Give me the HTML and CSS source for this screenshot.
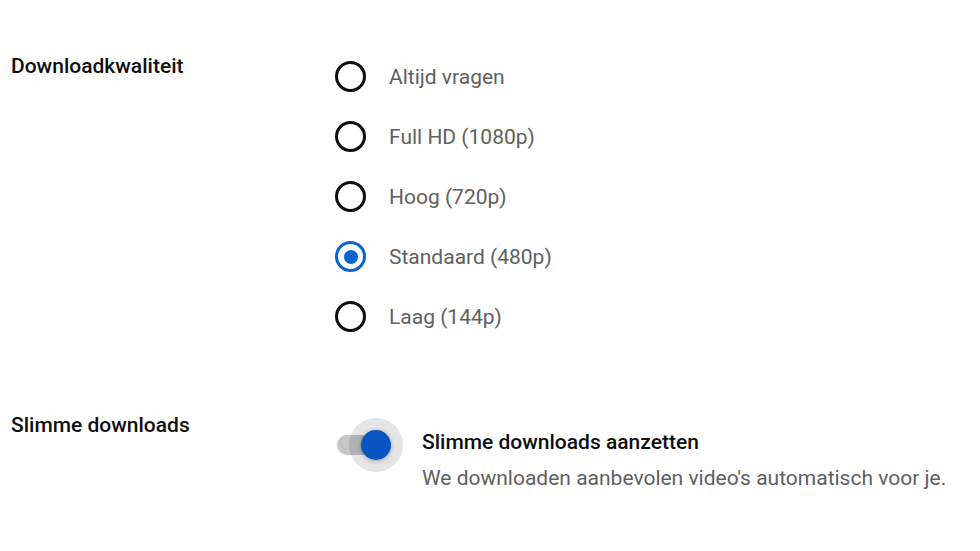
FILE: index.html
```html
<!DOCTYPE html>
<html>
<head>
<meta charset="utf-8">
<link rel="stylesheet" href="styles.css">
</head>
<body>
<div class="page">
  <section class="row quality">
    <div class="label">Downloadkwaliteit</div>
    <div class="options">
      <label class="option"><span class="radio"></span><span class="opt-text">Altijd vragen</span></label>
      <label class="option"><span class="radio"></span><span class="opt-text">Full HD (1080p)</span></label>
      <label class="option"><span class="radio"></span><span class="opt-text">Hoog (720p)</span></label>
      <label class="option"><span class="radio checked"></span><span class="opt-text">Standaard (480p)</span></label>
      <label class="option"><span class="radio"></span><span class="opt-text">Laag (144p)</span></label>
    </div>
  </section>
  <section class="row smart">
    <div class="label">Slimme downloads</div>
    <div class="toggle-row">
      <div class="toggle">
        <span class="track"></span>
        <span class="halo"></span>
        <span class="knob"></span>
      </div>
      <div class="toggle-text">
        <div class="toggle-title">Slimme downloads aanzetten</div>
        <div class="toggle-desc">We downloaden aanbevolen video's automatisch voor je.</div>
      </div>
    </div>
  </section>
</div>
</body>
</html>
```
FILE: styles.css
```css
html, body {
  margin: 0;
  padding: 0;
  background: #fff;
}
body {
  font-family: Roboto, "Noto Sans", sans-serif;
  color: #0f0f0f;
}
.page {
  padding: 52px 0 0 11px;
}
.row {
  display: flex;
}
.label {
  width: 324px;
  flex: none;
  font-size: 21px;
  line-height: 28px;
  font-weight: 500;
}
.options {
  display: flex;
  flex-direction: column;
  gap: 29px;
  padding-top: 9px;
}
.option {
  display: flex;
  align-items: center;
  height: 31px;
}
.radio {
  width: 25px;
  height: 25px;
  border: 3px solid #0f0f0f;
  border-radius: 50%;
  flex: none;
  position: relative;
}
.radio.checked {
  border-color: #0b62d3;
}
.radio.checked::after {
  content: "";
  position: absolute;
  left: 50%;
  top: 50%;
  width: 14px;
  height: 14px;
  margin: -7px 0 0 -7px;
  border-radius: 50%;
  background: #0b62d3;
}
.opt-text {
  margin-left: 23px;
  font-size: 21px;
  line-height: 28px;
  color: #606060;
}
.smart {
  margin-top: 79px;
}
.toggle-row {
  display: flex;
  margin-top: 6px;
}
.toggle {
  position: relative;
  width: 80px;
  height: 56px;
  flex: none;
}
.track {
  position: absolute;
  left: 2px;
  top: 18px;
  width: 54px;
  height: 20px;
  border-radius: 10px;
  background: #c6c6c6;
}
.halo {
  position: absolute;
  left: 14px;
  top: 1px;
  width: 54px;
  height: 54px;
  border-radius: 50%;
  background: rgba(0,0,0,0.1);
}
.knob {
  position: absolute;
  left: 26px;
  top: 13px;
  width: 30px;
  height: 30px;
  border-radius: 50%;
  background: #0a56c0;
  box-shadow: 0 1px 4px rgba(0,0,0,0.3);
}
.toggle-text {
  margin-left: 7px;
  padding-top: 11px;
}
.toggle-title {
  font-size: 21px;
  font-weight: 500;
  line-height: 28px;
}
.toggle-desc {
  font-size: 21px;
  line-height: 28px;
  color: #606060;
  margin-top: 8px;
}
```
